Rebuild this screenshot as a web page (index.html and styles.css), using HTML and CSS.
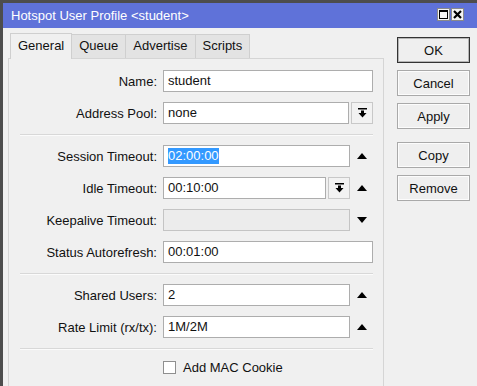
FILE: index.html
```html
<!DOCTYPE html>
<html lang="en">
<head>
    <meta charset="UTF-8">
    <meta name="viewport" content="width=device-width, initial-scale=1.0">
    <title>Hotspot User Profile &lt;student&gt;</title>
    <link rel="stylesheet" href="styles.css">
</head>
<body>
    <div class="window">
        <div class="titlebar">
            <span class="title">Hotspot User Profile &lt;student&gt;</span>
            <div class="win-ctrls">
                <span class="ctrl"><span class="max-box"></span></span>
                <span class="ctrl">
                    <svg width="9" height="9" viewBox="0 0 9 9"><path d="M1 1 L8 8 M8 1 L1 8" stroke="#000" stroke-width="2.2"/></svg>
                </span>
            </div>
        </div>
        <div class="content">
            <div class="main">
                <div class="tabs">
                    <div class="tab active">General</div>
                    <div class="tab">Queue</div>
                    <div class="tab">Advertise</div>
                    <div class="tab">Scripts</div>
                </div>
                <div class="panel">
                    <div class="row">
                        <label>Name:</label>
                        <div class="field"><div class="input">student</div></div>
                    </div>
                    <div class="row">
                        <label>Address Pool:</label>
                        <div class="field">
                            <div class="input">none</div>
                            <div class="drop">
                                <svg width="9" height="10" viewBox="0 0 9 10"><rect x="0" y="0" width="9" height="1.5" fill="#000"/><rect x="3" y="2.5" width="3" height="3" fill="#000"/><polygon points="0.5,5 8.5,5 4.5,9.5" fill="#000"/></svg>
                            </div>
                        </div>
                    </div>
                    <div class="sep"></div>
                    <div class="row">
                        <label>Session Timeout:</label>
                        <div class="field">
                            <div class="input"><span class="sel">02:00:00</span></div>
                            <div class="spin"><span class="up"></span></div>
                        </div>
                    </div>
                    <div class="row">
                        <label>Idle Timeout:</label>
                        <div class="field">
                            <div class="input">00:10:00</div>
                            <div class="drop">
                                <svg width="9" height="10" viewBox="0 0 9 10"><rect x="0" y="0" width="9" height="1.5" fill="#000"/><rect x="3" y="2.5" width="3" height="3" fill="#000"/><polygon points="0.5,5 8.5,5 4.5,9.5" fill="#000"/></svg>
                            </div>
                            <div class="spin"><span class="up"></span></div>
                        </div>
                    </div>
                    <div class="row">
                        <label>Keepalive Timeout:</label>
                        <div class="field">
                            <div class="input disabled"></div>
                            <div class="spin"><span class="down"></span></div>
                        </div>
                    </div>
                    <div class="row">
                        <label>Status Autorefresh:</label>
                        <div class="field"><div class="input">00:01:00</div></div>
                    </div>
                    <div class="sep"></div>
                    <div class="row">
                        <label>Shared Users:</label>
                        <div class="field">
                            <div class="input">2</div>
                            <div class="spin"><span class="up"></span></div>
                        </div>
                    </div>
                    <div class="row">
                        <label>Rate Limit (rx/tx):</label>
                        <div class="field">
                            <div class="input">1M/2M</div>
                            <div class="spin"><span class="up"></span></div>
                        </div>
                    </div>
                    <div class="sep"></div>
                    <div class="check-row">
                        <span class="checkbox"></span>
                        <span>Add MAC Cookie</span>
                    </div>
                </div>
            </div>
            <div class="actions">
                <button class="default">OK</button>
                <button>Cancel</button>
                <button>Apply</button>
                <button class="spaced">Copy</button>
                <button>Remove</button>
            </div>
        </div>
    </div>
</body>
</html>
```
FILE: styles.css
```css
* {
    box-sizing: border-box;
}
html, body {
    margin: 0;
    height: 100%;
    overflow: hidden;
}
body {
    font-family: "Liberation Sans", Arial, sans-serif;
    font-size: 13px;
    color: #111;
    background-color: #f0f0f0;
}
.window {
    height: 100%;
    border-left: 3px solid #4d4d4d;
    border-top: 3px solid #4d4d4d;
    background: #f0f0f0;
}
.titlebar {
    height: 25px;
    background-color: #5f72d9;
    display: flex;
    align-items: center;
    justify-content: space-between;
    padding-left: 8px;
}
.title {
    color: #fff;
}
.win-ctrls {
    display: flex;
    gap: 1px;
    margin-right: 13px;
    margin-top: -3px;
}
.ctrl {
    width: 13px;
    height: 13px;
    background: #f4f4f4;
    border: 1px solid #8a8a8a;
    display: flex;
    align-items: center;
    justify-content: center;
}
.max-box {
    width: 9px;
    height: 9px;
    border: 1px solid #000;
    border-top-width: 2px;
}
.content {
    display: flex;
    padding-top: 4px;
}
.main {
    margin-left: 5px;
    width: 376px;
}
.tabs {
    display: flex;
    align-items: flex-end;
    padding-left: 2px;
    height: 26px;
}
.tab {
    height: 24px;
    line-height: 22px;
    padding: 0 7px;
    background: #e3e3e3;
    border: 1px solid #cfcfcf;
    border-bottom: none;
    margin-right: -1px;
}
.tab.active {
    height: 26px;
    line-height: 24px;
    background: #f0f0f0;
    position: relative;
    z-index: 1;
    margin-bottom: -1px;
}
.panel {
    border: 1px solid #d5d5d5;
    border-bottom: none;
    padding: 11px 0 0 11px;
    height: 340px;
}
.row {
    display: flex;
    align-items: center;
    height: 22px;
    margin-bottom: 10px;
}
.row label {
    width: 137px;
    text-align: right;
    margin-right: 6px;
}
.field {
    width: 210px;
    display: flex;
    height: 22px;
}
.input {
    flex: 1;
    height: 22px;
    line-height: 20px;
    padding-left: 4px;
    background: #fff;
    border: 1px solid #adadad;
    white-space: nowrap;
}
.input.disabled {
    background: #ececec;
    border-color: #c4c4c4;
}
.sel {
    background: #3399ff;
    color: #fff;
    display: inline-block;
    line-height: 16px;
}
.drop {
    width: 22px;
    height: 22px;
    margin-left: 2px;
    border: 1px solid #c8c8c8;
    background: #f2f2f2;
    display: flex;
    align-items: center;
    justify-content: center;
}
.spin {
    width: 23px;
    flex: none;
    display: flex;
    align-items: center;
    justify-content: center;
    padding-left: 1px;
}
.up {
    width: 0;
    height: 0;
    border-left: 5px solid transparent;
    border-right: 5px solid transparent;
    border-bottom: 6px solid #000;
}
.down {
    width: 0;
    height: 0;
    border-left: 5px solid transparent;
    border-right: 5px solid transparent;
    border-top: 6px solid #000;
}
.sep {
    width: 353px;
    height: 2px;
    border-top: 1px solid #d8d8d8;
    border-bottom: 1px solid #fbfbfb;
    margin: 2px 0 9px;
}
.check-row {
    display: flex;
    align-items: center;
    gap: 7px;
    padding-left: 143px;
    height: 16px;
}
.checkbox {
    width: 13px;
    height: 13px;
    background: #fff;
    border: 1px solid #8f8f8f;
}
.actions {
    margin-left: 13px;
    margin-top: 5px;
    width: 73px;
    display: flex;
    flex-direction: column;
}
button {
    height: 26px;
    margin-bottom: 7px;
    font-family: "Liberation Sans", Arial, sans-serif;
    font-size: 13px;
    color: #111;
    background: #efefef;
    border: 1px solid #a9a9a9;
    box-shadow: inset 0 0 0 1px #fcfcfc;
    padding: 0;
}
button.default {
    border-color: #333;
    box-shadow: inset 0 0 0 1px #b5b5b5;
}
button.spaced {
    margin-top: 6px;
}
```
